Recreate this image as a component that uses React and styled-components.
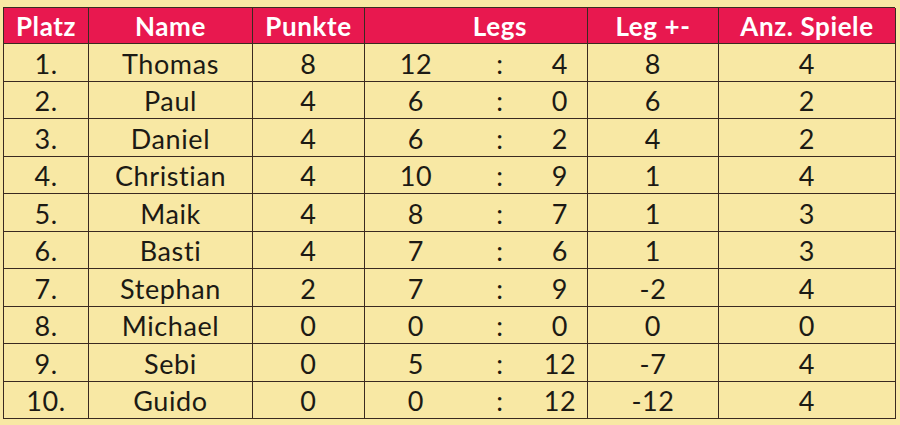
import React from "react";
import styled, { createGlobalStyle } from "styled-components";

const GlobalStyle = createGlobalStyle`
  html, body {
    margin: 0;
    padding: 0;
    background: #f8e8a4;
  }
  body {
    font-family: Lato, "Open Sans", sans-serif;
  }
`;

const Page = styled.div`
  width: 900px;
  height: 425px;
  padding: 7px 0 0 3px;
  box-sizing: border-box;
  background: #f8e8a4;
`;

const Table = styled.div`
  display: grid;
  grid-template-columns: 85px 164px 112px 102px 66px 55px 131px 177px;
  grid-template-rows: 36px repeat(10, 37.5px);
  width: 892px;
  border-top: 1px solid #3a2a20;
  border-left: 1px solid #3a2a20;
  box-sizing: border-box;
`;

const HeadCell = styled.div`
  grid-column: span ${(p) => p.$span || 1};
  display: flex;
  align-items: center;
  justify-content: center;
  padding-left: ${(p) => p.$shift || 0}px;
  background: #e8184f;
  color: #fff;
  font-weight: 700;
  font-size: 26px;
  letter-spacing: 0.6px;
  white-space: nowrap;
  border-right: 1px solid #3a2a20;
  border-bottom: 1px solid #3a2a20;
`;

const Cell = styled.div`
  display: flex;
  align-items: center;
  justify-content: center;
  color: #1c1a14;
  font-size: 27px;
  font-weight: 400;
  letter-spacing: 0.6px;
  border-bottom: 1px solid #3a2a20;
  border-right: ${(p) => (p.$open ? "none" : "1px solid #3a2a20")};
  padding-top: 2px;
  box-sizing: border-box;
`;

const rows = [
  ["1.", "Thomas", 8, 12, 4, 8, 4],
  ["2.", "Paul", 4, 6, 0, 6, 2],
  ["3.", "Daniel", 4, 6, 2, 4, 2],
  ["4.", "Christian", 4, 10, 9, 1, 4],
  ["5.", "Maik", 4, 8, 7, 1, 3],
  ["6.", "Basti", 4, 7, 6, 1, 3],
  ["7.", "Stephan", 2, 7, 9, -2, 4],
  ["8.", "Michael", 0, 0, 0, 0, 0],
  ["9.", "Sebi", 0, 5, 12, -7, 4],
  ["10.", "Guido", 0, 0, 12, -12, 4],
];

export default function App() {
  return (
    <Page>
      <GlobalStyle />
      <Table>
        <HeadCell>Platz</HeadCell>
        <HeadCell>Name</HeadCell>
        <HeadCell>Punkte</HeadCell>
        <HeadCell $span={3} $shift={48}>Legs</HeadCell>
        <HeadCell>Leg +-</HeadCell>
        <HeadCell>Anz. Spiele</HeadCell>
        {rows.map(([place, name, pts, won, lost, diff, games]) => (
          <React.Fragment key={place}>
            <Cell>{place}</Cell>
            <Cell>{name}</Cell>
            <Cell>{pts}</Cell>
            <Cell $open>{won}</Cell>
            <Cell $open>:</Cell>
            <Cell>{lost}</Cell>
            <Cell>{diff}</Cell>
            <Cell>{games}</Cell>
          </React.Fragment>
        ))}
      </Table>
    </Page>
  );
}
